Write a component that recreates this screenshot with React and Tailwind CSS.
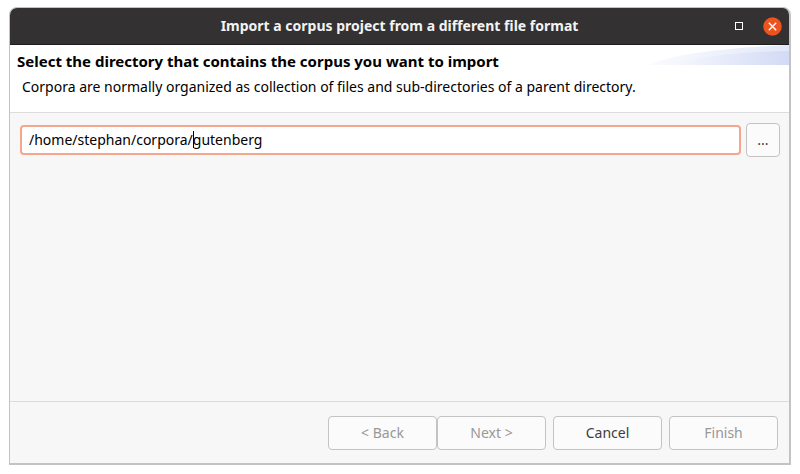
import { useState } from "react";

const buttonBase =
  "h-[34px] rounded-[4px] border border-[#c3c3c3] bg-[#fbfbfb] text-sm leading-5";

function TitleBar() {
  return (
    <header className="grid h-[37px] shrink-0 grid-cols-[1fr_auto_1fr] items-center border-b border-[#1d1d1d] bg-[#333132]">
      <span />
      <h1 className="text-sm leading-5 font-bold text-[#f3f3f3]">
        Import a corpus project from a different file format
      </h1>
      <div className="flex items-center justify-end gap-5 pr-[7px]">
        <button type="button" aria-label="Maximize" className="flex">
          <svg width="8" height="8" viewBox="0 0 8 8" shapeRendering="crispEdges">
            <rect x="0.5" y="0.5" width="7" height="7" fill="none" stroke="#fff" />
          </svg>
        </button>
        <button type="button" aria-label="Close" className="flex">
          <svg width="19" height="19" viewBox="0 0 19 19">
            <circle cx="9.5" cy="9.5" r="9.3" fill="#e95420" />
            <path d="M5.8 5.8l7.4 7.4M13.2 5.8l-7.4 7.4" stroke="#fff" strokeWidth="1.4" />
          </svg>
        </button>
      </div>
    </header>
  );
}

function BannerArt() {
  return (
    <svg
      className="absolute top-0 right-0"
      width="140"
      height="20"
      viewBox="0 0 140 20"
      aria-hidden="true"
    >
      <defs>
        <linearGradient id="outer" x1="0" x2="1">
          <stop offset="0" stopColor="#fafbfe" />
          <stop offset="1" stopColor="#e1e8f9" />
        </linearGradient>
        <linearGradient id="inner" x1="0" x2="1">
          <stop offset="0" stopColor="#f8f9fe" />
          <stop offset="1" stopColor="#d2dbf5" />
        </linearGradient>
      </defs>
      <path d="M0 20C24 9 75 3 140 0V20Z" fill="url(#outer)" />
      <path d="M20 20C50 11 90 7 140 6V20Z" fill="url(#inner)" />
    </svg>
  );
}

export default function App() {
  const [path, setPath] = useState("/home/stephan/corpora/gutenberg");
  return (
    <div className="flex min-h-screen bg-white px-[9px] pt-[7px] pb-[9px] font-['Noto_Sans',sans-serif] text-black">
      <main className="flex flex-1 flex-col overflow-hidden rounded-t-lg border border-r-2 border-b-2 border-[#c3c3c3] bg-[#f7f7f7]">
        <TitleBar />
        <section className="relative h-[68px] border-b border-[#dcdcdc] bg-white pt-[6px] pl-[7px]">
          <BannerArt />
          <h2 className="text-[15px] leading-5 font-bold">
            Select the directory that contains the corpus you want to import
          </h2>
          <p className="mt-[6px] pl-[5px] text-sm leading-5">
            Corpora are normally organized as collection of files and sub-directories of a parent
            directory.
          </p>
        </section>
        <section className="flex flex-1 items-start gap-[5px] p-[10px] pr-[9px]">
          <div className="relative mt-[2px] flex-1">
            <input
              type="text"
              aria-label="Corpus directory"
              value={path}
              onChange={(e) => setPath(e.target.value)}
              className="block h-[30px] w-full rounded-[4px] border-2 border-[#f4a78d] bg-white px-[7px] pb-[2px] text-sm leading-5 outline-none"
            />
            <span className="absolute top-[6px] left-[173px] h-[17px] w-px bg-black" />
          </div>
          <button type="button" aria-label="Browse" className={`${buttonBase} w-[34px] text-[#3d3d3d]`}>
            ...
          </button>
        </section>
        <footer className="flex justify-end gap-[7px] border-t border-[#dcdcdc] pt-[14px] pr-[11px] pb-[13px]">
          <div className="flex">
            <button type="button" disabled className={`${buttonBase} w-[109px] text-[#989898]`}>
              &lt; Back
            </button>
            <button type="button" disabled className={`${buttonBase} w-[109px] text-[#989898]`}>
              Next &gt;
            </button>
          </div>
          <button type="button" className={`${buttonBase} w-[109px] text-[#3d3d3d]`}>
            Cancel
          </button>
          <button type="button" disabled className={`${buttonBase} w-[109px] text-[#989898]`}>
            Finish
          </button>
        </footer>
      </main>
    </div>
  );
}
